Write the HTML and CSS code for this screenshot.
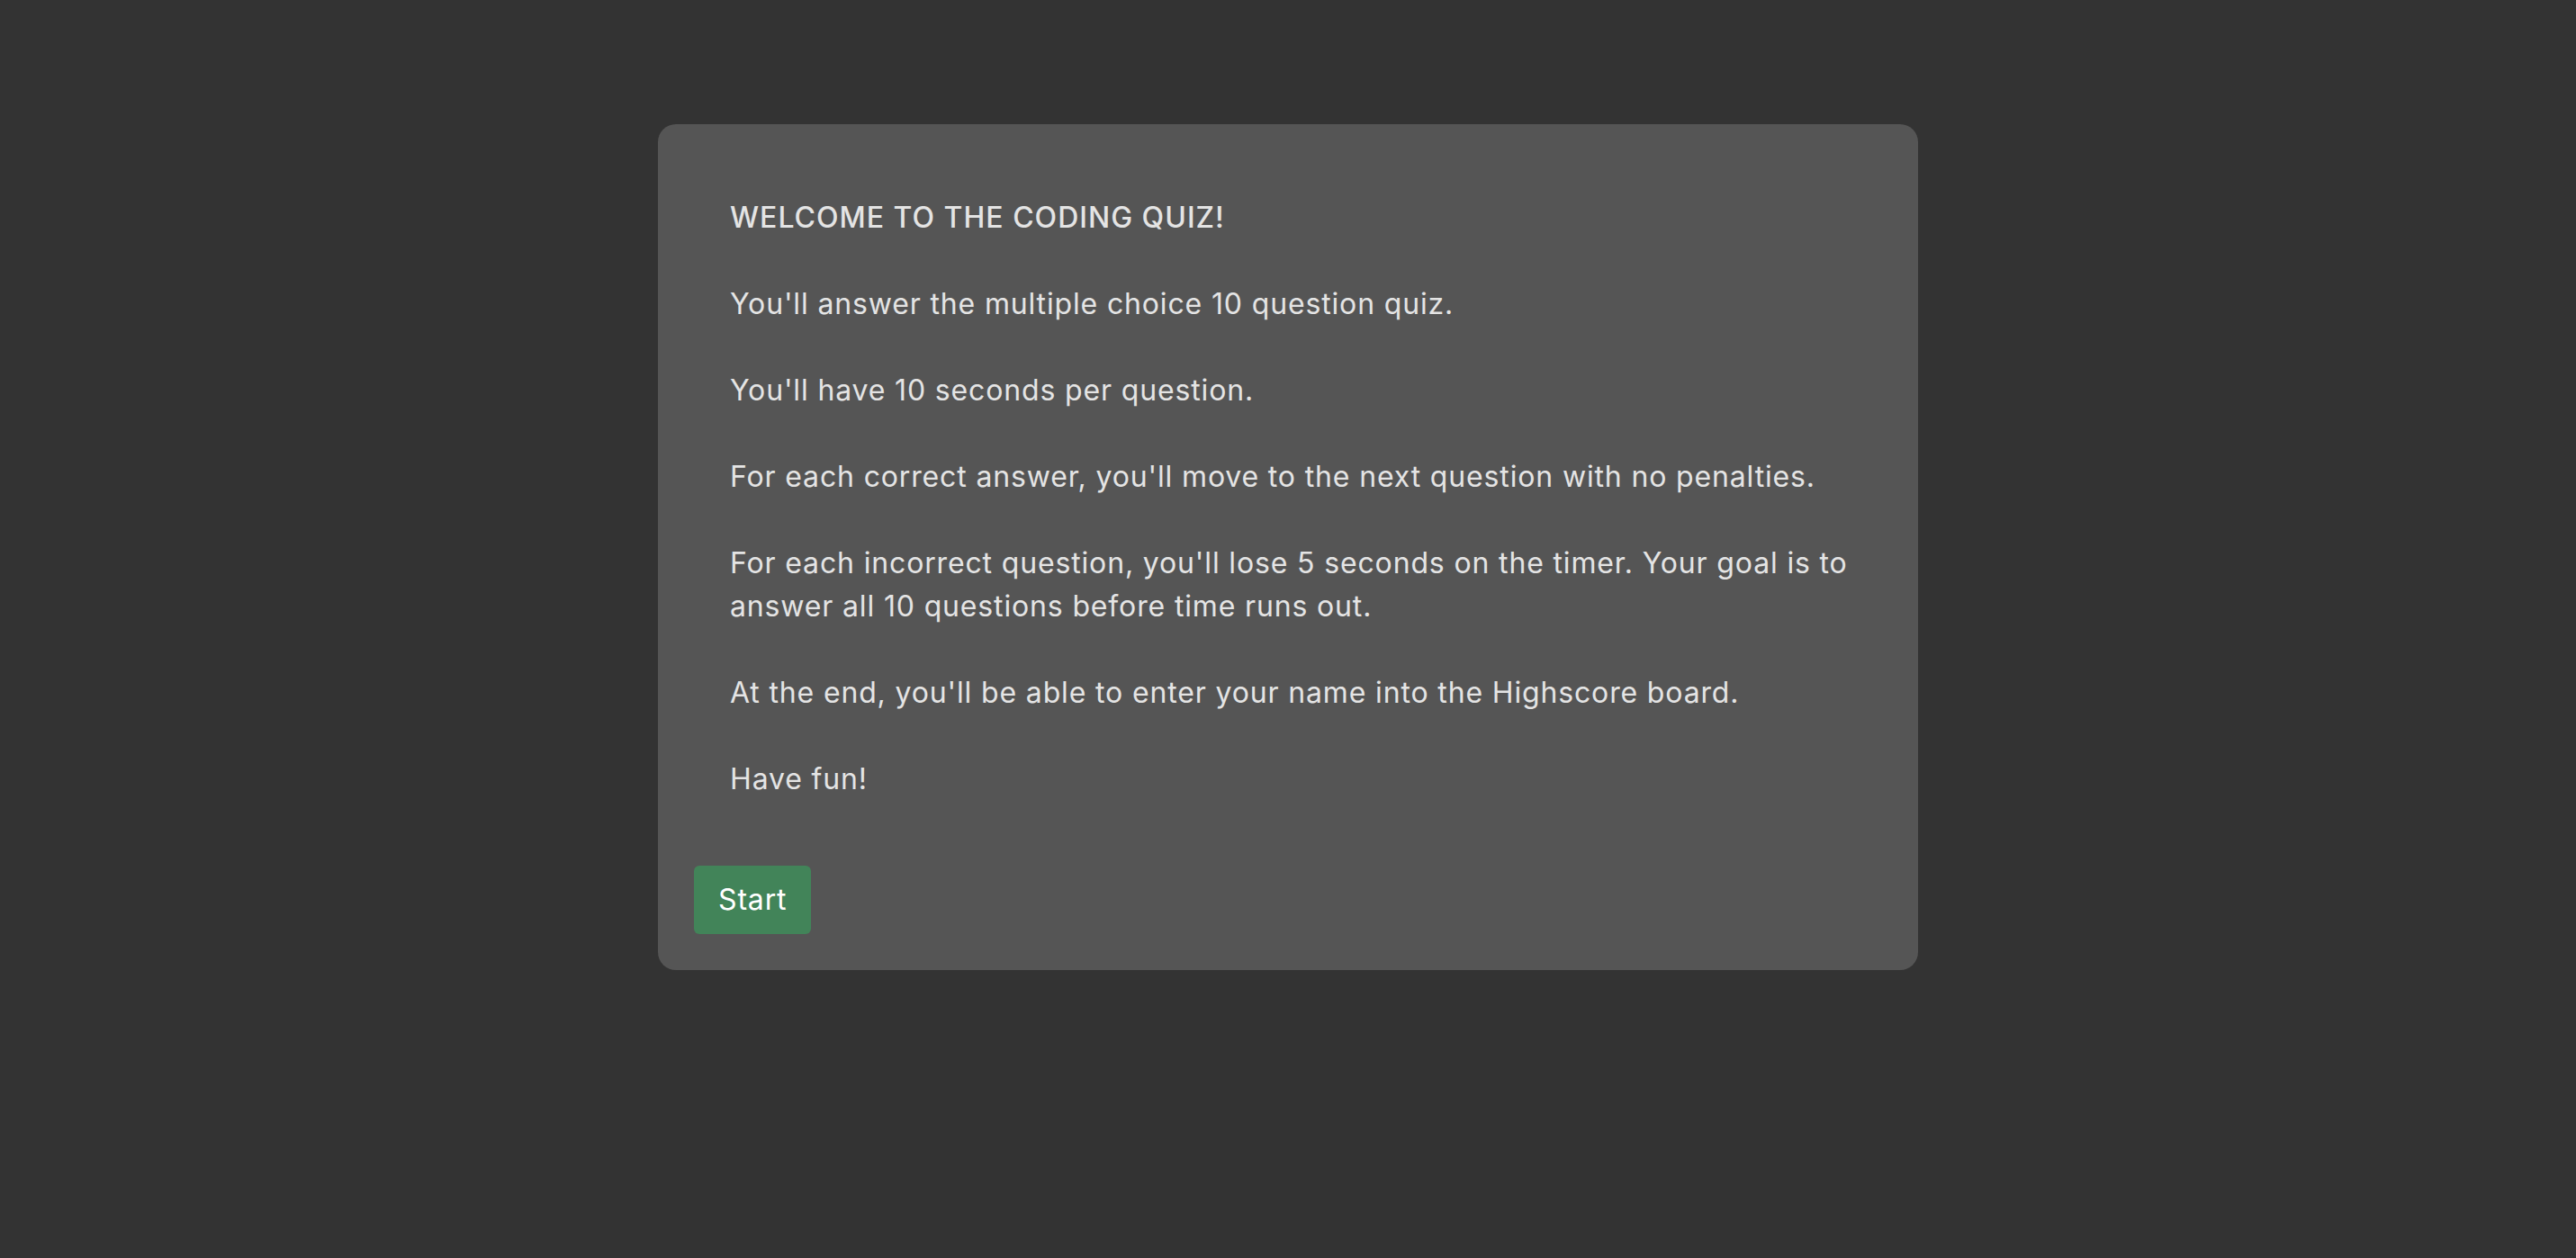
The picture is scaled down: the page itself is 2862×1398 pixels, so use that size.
FILE: index.html
```html
<!DOCTYPE html>
<html lang="en">
<head>
<meta charset="utf-8">
<title>Coding Quiz</title>
<link rel="stylesheet" href="styles.css">
</head>
<body>
<main class="page">
  <section class="card">
    <div class="intro">
      <p class="intro-text"><span class="title">WELCOME TO THE CODING QUIZ!</span><br><br>You'll answer the multiple choice 10 question quiz.<br><br>You'll have 10 seconds per question.<br><br>For each correct answer, you'll move to the next question with no penalties.<br><br>For each incorrect question, you'll lose 5 seconds on the timer. Your goal is to answer all 10 questions before time runs out.<br><br>At the end, you'll be able to enter your name into the Highscore board.<br><br>Have fun!</p>
    </div>
    <button class="start-btn" type="button">Start</button>
  </section>
</main>
</body>
</html>
```
FILE: styles.css
```css
html, body {
  margin: 0;
  padding: 0;
  background: #333333;
}
body {
  font-family: Inter, "Open Sans", "Liberation Sans", sans-serif;
  color: #e4e4e4;
}
.page {
  display: flex;
  justify-content: center;
  padding-top: 138px;
}
.card {
  box-sizing: border-box;
  width: 1400px;
  padding: 40px;
  background: #555555;
  border-radius: 20px;
}
.intro {
  padding: 40px 16px 72px 40px;
}
.intro-text {
  margin: 0;
  font-size: 32px;
  line-height: 48px;
  letter-spacing: 0.85px;
}
.title {
  font-weight: 500;
  letter-spacing: 1px;
}
.start-btn {
  display: block;
  box-sizing: border-box;
  height: 76px;
  padding: 0 27px;
  border: none;
  border-radius: 6px;
  background: #428459;
  color: #ffffff;
  font-family: inherit;
  font-size: 32px;
  line-height: 48px;
  letter-spacing: 0.85px;
}
```
